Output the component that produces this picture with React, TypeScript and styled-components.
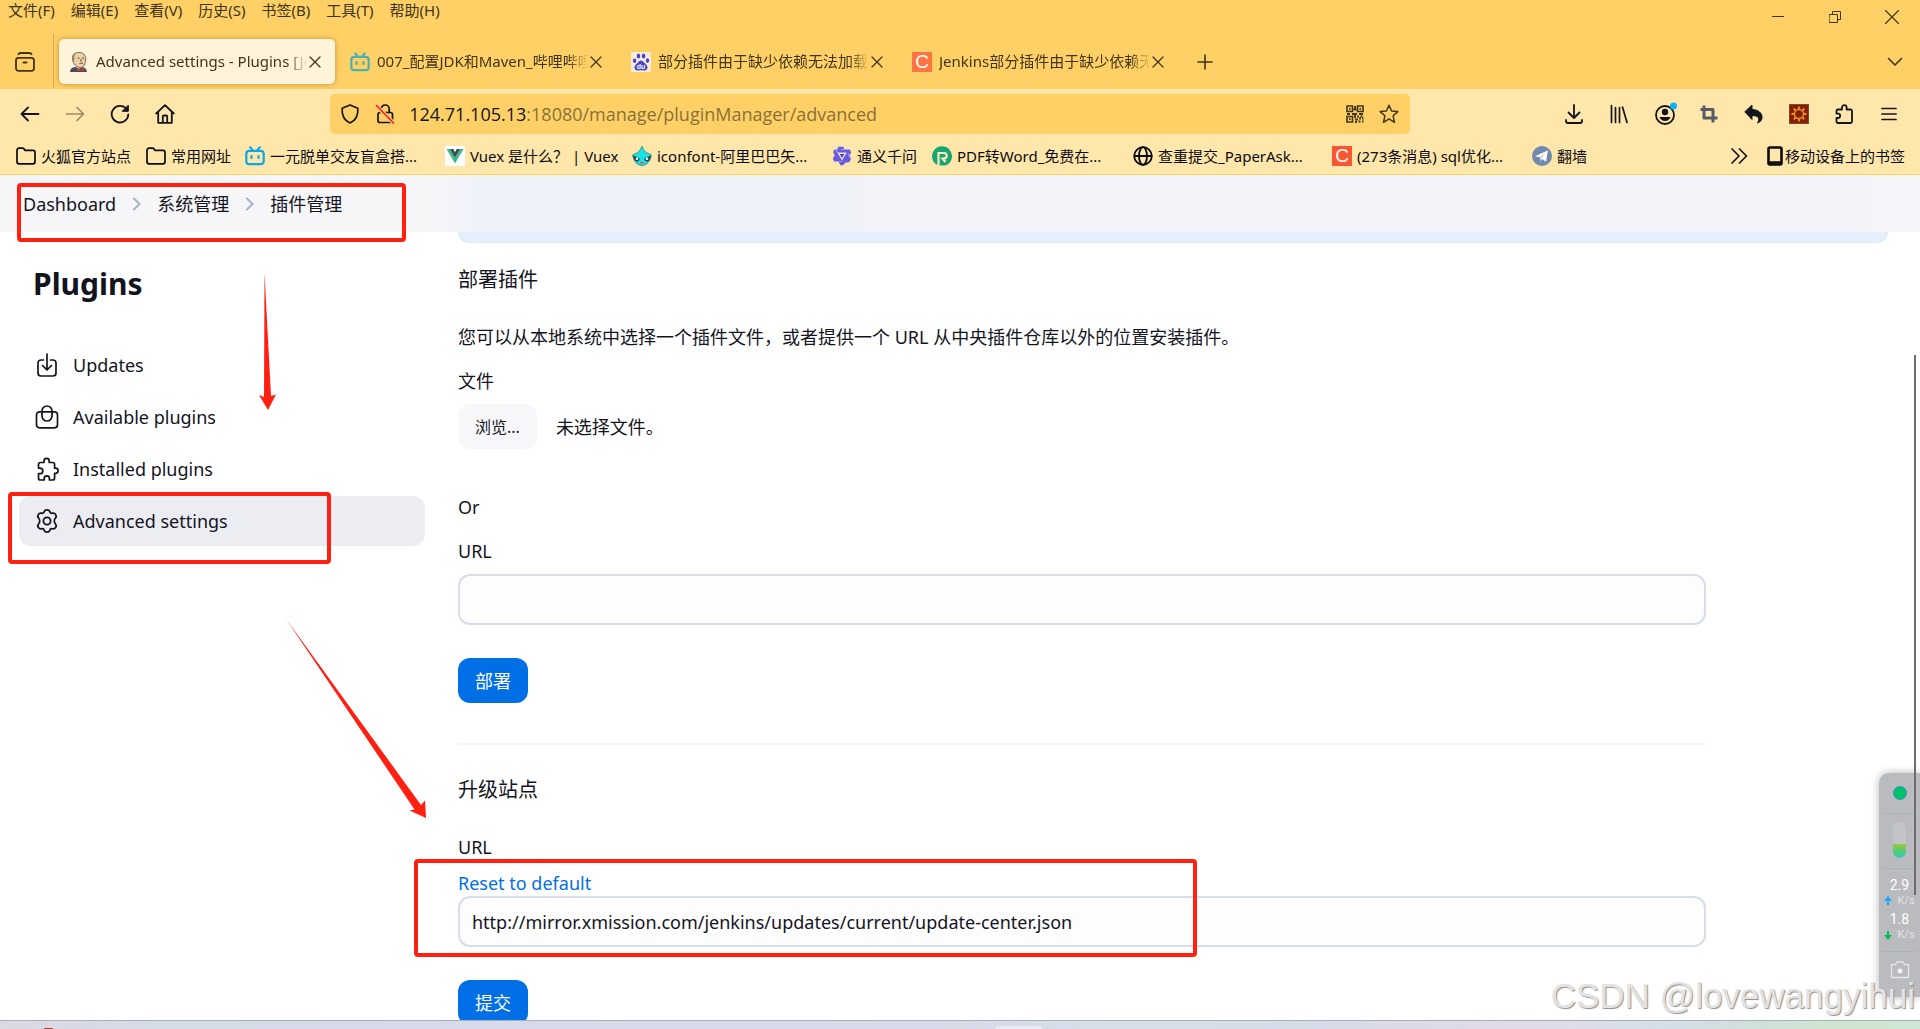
import React from "react";
import styled, { createGlobalStyle } from "styled-components";

const GlobalStyle = createGlobalStyle`
  *, *::before, *::after { box-sizing: border-box; }
  body {
    margin: 0;
    overflow: hidden;
    font-family: "Noto Sans", "Noto Sans CJK SC", sans-serif;
    color: #14141f;
  }
  button, input { font: inherit; color: inherit; }
  button { border: 0; padding: 0; background: none; }
  a { color: inherit; text-decoration: none; }
  h1, h2, p { margin: 0; font-weight: 400; }
  svg { display: block; flex: none; }
`;

const Window = styled.div`
  position: relative;
  display: flex;
  flex-direction: column;
  height: 100vh;
  overflow: hidden;
  background: #fff;
`;

/* ---------- browser chrome ---------- */

const TitleArea = styled.header`
  display: flex;
  flex-direction: column;
  height: 89px;
  flex: none;
  background: #ffd066;
  color: #40341a;
`;

const MenuRow = styled.div`
  display: flex;
  justify-content: space-between;
  height: 34px;
`;

const MenuBar = styled.nav`
  display: flex;
  gap: 16px;
  height: 20px;
  padding-left: 8px;
  align-items: center;
`;

const MenuButton = styled.button`
  font-size: 15px;
  line-height: 20px;
  white-space: nowrap;
`;

const WindowControls = styled.div`
  display: flex;
  align-items: center;
  height: 34px;
`;

const ControlButton = styled.button`
  display: flex;
  align-items: center;
  justify-content: center;
  width: 57px;
  height: 34px;
`;

const TabStrip = styled.div`
  display: flex;
  align-items: center;
  height: 55px;
`;

const TabOverview = styled.button`
  display: flex;
  align-items: center;
  justify-content: center;
  width: 54px;
  height: 55px;
  padding-right: 4px;
  border-right: 1px solid #d9ad4c;
`;

const TabList = styled.div`
  display: flex;
  gap: 5px;
  padding: 0 7px 0 5px;
`;

const Tab = styled.div<{ $active?: boolean }>`
  display: flex;
  align-items: center;
  width: 276px;
  height: 45px;
  padding: 0 12px 0 10px;
  border-radius: 5px;
  background: ${(p) => (p.$active ? "#fff3da" : "transparent")};
  box-shadow: ${(p) => (p.$active ? "0 0 5px rgba(120, 80, 0, 0.5)" : "none")};
`;

const TabTitle = styled.span`
  flex: 1;
  min-width: 0;
  margin-left: 7px;
  padding-bottom: 2px;
  overflow: hidden;
  white-space: nowrap;
  font-size: 15px;
  line-height: 24px;
  mask-image: linear-gradient(to right, #000 calc(100% - 20px), transparent);
`;

const IconButton = styled.button<{ $w?: number; $h?: number }>`
  display: flex;
  align-items: center;
  justify-content: center;
  flex: none;
  width: ${(p) => p.$w ?? 40}px;
  height: ${(p) => p.$h ?? 40}px;
`;

const Grow = styled.div<{ $by?: number }>`
  flex: ${(p) => p.$by ?? 1};
`;

const NavToolbar = styled.div`
  display: flex;
  align-items: center;
  flex: none;
  height: 49px;
  padding: 1px 8px 0 7px;
  background: #ffe6ab;
`;

const UrlBar = styled.form`
  display: flex;
  align-items: center;
  flex: 15;
  height: 40px;
  padding: 0 5px 0 8px;
  border-radius: 5px;
  background: #ffd066;
`;

const UrlText = styled.div`
  flex: 1;
  margin-left: 1px;
  font-family: "Open Sans", "Noto Sans", sans-serif;
  font-size: 18px;
  line-height: 24px;
  color: #8a7038;
  white-space: nowrap;
`;

const UrlHost = styled.span`
  color: #15141a;
`;

const BookmarkBar = styled.nav`
  display: flex;
  align-items: center;
  flex: none;
  height: 37px;
  padding: 0 15px 0 16px;
  border-bottom: 1px solid #ffd066;
  background: #ffe6ab;
`;

const Bookmark = styled.a<{ $w?: number; $gap?: number }>`
  display: flex;
  align-items: center;
  flex: none;
  gap: ${(p) => p.$gap ?? 5}px;
  width: ${(p) => (p.$w ? p.$w + "px" : "auto")};
  font-size: 15px;
  line-height: 24px;
  color: #0c0b10;
  white-space: nowrap;
`;

/* ---------- page ---------- */

const Page = styled.div`
  display: flex;
  flex-direction: column;
  flex: 1;
  min-height: 0;
  overflow: hidden;
`;

const Breadcrumbs = styled.nav`
  display: flex;
  align-items: flex-start;
  flex: none;
  height: 57px;
  padding: 17px 23px 0;
  gap: 16px;
  background: linear-gradient(to right, #f6f6f9 430px, #eff2f9 480px, #eff2f9 820px, #f2f3f8 900px, #f2f3f8 1840px, #f5f6f9 1910px);
  font-size: 18px;
  line-height: 24px;

  svg { margin-top: 5px; }
`;

const Columns = styled.div`
  display: flex;
  flex: 1;
  min-height: 0;
`;

const Sidebar = styled.aside`
  flex: none;
  width: 458px;
  padding: 30px 33px 0 19px;
`;

const PageTitle = styled.h1`
  margin: 0 0 34px 14px;
  font-size: 30px;
  font-weight: 700;
  line-height: 44px;
`;

const TaskList = styled.ul`
  display: flex;
  flex-direction: column;
  gap: 2px;
  margin: 0;
  padding: 0;
  list-style: none;
`;

const Task = styled.a<{ $active?: boolean }>`
  display: flex;
  align-items: center;
  gap: 14px;
  height: 50px;
  padding-left: 16px;
  border-radius: 12px;
  background: ${(p) => (p.$active ? "#ecedf3" : "transparent")};
  font-size: 18px;
  line-height: 24px;
`;

const Main = styled.main`
  flex: 1;
  min-width: 0;
  padding-right: 32px;
`;

const Alert = styled.div`
  height: 11px;
  border: 1px solid #d6eafa;
  border-top: 0;
  border-radius: 0 0 12px 12px;
  background: #e5effc;
`;

const Section = styled.section`
  display: flex;
  flex-direction: column;
  align-items: flex-start;
  max-width: 1248px;
`;

const SectionTitle = styled.h2`
  margin: 22px 0 30px;
  font-size: 20px;
  line-height: 30px;
`;

const Text = styled.p`
  margin-bottom: 20px;
  font-size: 18px;
  line-height: 24px;
`;

const Label = styled.label`
  margin-bottom: 11px;
  font-size: 18px;
  line-height: 24px;
`;

const FileRow = styled.div`
  display: flex;
  align-items: center;
  gap: 19px;
  margin-bottom: 46px;
  font-size: 18px;
  line-height: 24px;
`;

const FileInput = styled.input`
  position: absolute;
  width: 1px;
  height: 1px;
  opacity: 0;
`;

const FileButton = styled.label`
  display: flex;
  align-items: center;
  height: 45px;
  padding: 0 17px;
  border-radius: 12px;
  background: #f7f7fa;
  font-size: 16px;
`;

const TextInput = styled.input`
  width: 100%;
  height: 51px;
  padding: 0 12px;
  border: 2px solid #d7dde9;
  border-radius: 12px;
  background: #fdfdfd;
  font-size: 18px;
  line-height: 24px;
  outline: none;
`;

const PrimaryButton = styled.button`
  height: 45px;
  margin-top: 33px;
  padding: 0 17px;
  border-radius: 12px;
  background: #006fe6;
  color: #fff;
  font-size: 18px;
  line-height: 24px;
`;

const Divider = styled.hr`
  width: 100%;
  height: 2px;
  margin: 40px 0 8px;
  border: 0;
  background: #f3f3f9;
`;

const ResetLink = styled.a`
  margin: 1px 0;
  color: #006fe6;
  font-size: 18px;
  line-height: 24px;
`;

const Taskbar = styled.footer`
  display: flex;
  align-items: flex-end;
  flex: none;
  height: 9px;
  border-top: 1px solid #a9adb8;
  background: linear-gradient(to right, #dcd8e4 0, #d6dbe8 8%, #d8dae8 50%, #d6dfea 60%, #d6dbe8 68%, #e2d9e8 79%, #dcdeea 83%, #d3dfe8 87%, #d0e0dc 91%, #cfe4d0 95%, #cfe6d4 100%);
`;

const TaskbarItem = styled.span<{ $left: number; $w: number; $h: number; $color: string }>`
  margin-left: ${(p) => p.$left}px;
  width: ${(p) => p.$w}px;
  height: ${(p) => p.$h}px;
  border-radius: 4px 4px 0 0;
  background: ${(p) => p.$color};
`;

/* ---------- things floating over the page ---------- */

const ScrollThumb = styled.div`
  position: absolute;
  top: 355px;
  right: 4px;
  width: 2px;
  height: 540px;
  background: #6c6d70;
`;

const Monitor = styled.aside`
  position: absolute;
  top: 773px;
  right: 0;
  display: flex;
  flex-direction: column;
  align-items: center;
  width: 41px;
  height: 224px;
  padding: 13px 4px 0;
  border-radius: 10px 0 0 10px;
  background: #babbbf;
  box-shadow: 0 0 8px rgba(0, 0, 0, 0.3);
`;

const StatusDot = styled.span`
  width: 14px;
  height: 14px;
  margin-bottom: 3px;
  border: 1px solid #3b90c8;
  border-radius: 50%;
  background: #00c16a;
`;

const MonitorRule = styled.span`
  width: 100%;
  height: 1px;
  margin: 10px 0 8px;
  background: #a9b4b8;
`;

const Gauge = styled.span`
  width: 13px;
  height: 36px;
  border-radius: 7px;
  background: linear-gradient(to bottom, #c3c4c8 22px, #9cc63c 22px, #52cd74 29px, #3cc3c0 36px);
`;

const Speeds = styled.div`
  display: flex;
  flex-direction: column;
  gap: 4px;
`;

const Speed = styled.div`
  display: flex;
  flex-direction: column;
  align-items: center;
  color: #fff;
  font-family: Roboto, "Noto Sans", sans-serif;
  font-size: 14px;
  line-height: 17px;
`;

const SpeedUnit = styled.span`
  display: flex;
  align-items: center;
  gap: 5px;
  color: #e2e2e4;
  font-size: 11px;
  line-height: 13px;
`;

const Watermark = styled.div`
  position: absolute;
  right: 5px;
  bottom: 13px;
  color: #e3e3e4;
  font-family: "Liberation Sans", Arial, sans-serif;
  font-size: 35px;
  line-height: 40px;
  text-shadow: 1px 1px 1px #8e8e8e;
  white-space: nowrap;
`;

const Highlight = styled.div<{ $x: number; $y: number; $w: number; $h: number }>`
  position: absolute;
  left: ${(p) => p.$x}px;
  top: ${(p) => p.$y}px;
  width: ${(p) => p.$w}px;
  height: ${(p) => p.$h}px;
  border: 4px solid #ff2012;
  border-radius: 4px;
  pointer-events: none;
`;

const Arrow = styled.svg<{ $x: number; $y: number }>`
  position: absolute;
  left: ${(p) => p.$x}px;
  top: ${(p) => p.$y}px;
  fill: #ff2012;
  pointer-events: none;
`;

/* ---------- icons ---------- */

type IconProps = { size?: number; sw?: number; box?: number; children: React.ReactNode };

const Icon = ({ size = 20, sw = 2, box = 20, children }: IconProps) => (
  <svg width={size} height={size} viewBox={`0 0 ${box} ${box}`} fill="none" stroke="currentColor" strokeWidth={sw} strokeLinecap="round" strokeLinejoin="round" aria-hidden="true">
    {children}
  </svg>
);

const CloseIcon = () => (
  <Icon size={12} box={12} sw={1.3}><path d="M1 1l10 10M11 1L1 11" /></Icon>
);

const FolderIcon = () => (
  <Icon sw={1.7}><path d="M1 4.2a2 2 0 0 1 2-2h3.5a2 2 0 0 1 1.6.8l1 1.4H17a2 2 0 0 1 2 2v9.4a2 2 0 0 1-2 2H3a2 2 0 0 1-2-2z" /></Icon>
);

const BiliIcon = ({ color }: { color: string }) => (
  <svg width="20" height="20" viewBox="0 0 20 20" fill="none" stroke={color} strokeWidth="2.2" strokeLinecap="round" aria-hidden="true">
    <rect x="1.3" y="4.8" width="17.4" height="13.4" rx="3" />
    <path d="M5.2 1.3l2.4 3M14.8 1.3l-2.4 3M6.5 10v2M13.5 10v2" />
  </svg>
);

const JenkinsIcon = () => (
  <svg width="20" height="20" viewBox="0 0 20 20" aria-hidden="true">
    <path d="M1 20c0-3 2-4.500 5-5l7 0c3 .5 4.500 2 5 5z" fill="#41505c" />
    <path d="M6 13l3 4 5-2-1-3z" fill="#f6f1e8" />
    <path d="M3.500 7C3.300 3 6 .4 10 .4S16.700 3 16.700 7c0 5-2 8.500-5.200 8.500C8 15.500 3.800 12 3.500 7z" fill="#ecd0a8" stroke="#5c4a3a" strokeWidth=".8" />
    <path d="M3.500 8C2.400 4.500 4 1.400 7 .8 5 3 5.200 5 5.300 9.500z" fill="#8b8275" />
    <path d="M8.500 6.200h2M13 6.200h2M10.500 11.500q2-1 3.500 0M12 7v2.500" stroke="#4b3a2c" strokeWidth=".9" fill="none" />
    <path d="M8.500 16l3 1.200L15 16v3.500l-3.200-1.200-3.300 1.200z" fill="#d33a2e" />
  </svg>
);

const BaiduIcon = () => (
  <svg width="20" height="20" viewBox="0 0 20 20" aria-hidden="true">
    <rect width="20" height="20" rx="2" fill="#f8eedd" />
    <g fill="#4a46c6">
      <ellipse cx="3.600" cy="8.800" rx="1.700" ry="2.300" />
      <ellipse cx="7.500" cy="4" rx="1.800" ry="2.500" />
      <ellipse cx="12.600" cy="4" rx="1.800" ry="2.500" />
      <ellipse cx="16.500" cy="8.600" rx="1.700" ry="2.300" />
      <path d="M10 8.400c2 0 3 2 4.500 3.400 2 1.900 2.600 3.500 1.600 5.200-1.300 2.100-3.800 1.300-6.100 1.300s-4.800.8-6.100-1.300c-1-1.700-.4-3.300 1.600-5.200C7 10.400 8 8.400 10 8.400z" />
    </g>
    <text x="10" y="17" textAnchor="middle" fontSize="7" fontWeight="700" fill="#fff" fontFamily="Liberation Sans, sans-serif">du</text>
  </svg>
);

const LetterBadge = styled.span<{ $bg: string }>`
  flex: none;
  width: 20px;
  height: 20px;
  background: ${(p) => p.$bg};
  color: #fff;
  font-family: "Liberation Sans", Arial, sans-serif;
  font-size: 19px;
  line-height: 20px;
  text-align: center;
`;

const VueIcon = () => (
  <svg width="20" height="20" viewBox="0 0 20 20" aria-hidden="true">
    <rect width="20" height="20" fill="#fff" />
    <path d="M1.500 3H5l5 8.700L15 3h3.500L10 17.500z" fill="#41b883" />
    <path d="M5 3h3.200L10 6.200 11.800 3H15l-5 8.700z" fill="#35495e" />
  </svg>
);

const IconfontIcon = () => (
  <svg width="20" height="20" viewBox="0 0 20 20" aria-hidden="true">
    <path d="M10 0c1 3 2.500 5 4.500 6.500L19.500 9l-1 3.500c-1.500 4.500-5 7-8.500 7s-7-2.500-8.500-7L.5 9l5-2.500C7.500 5 9 3 10 0z" fill="#1fe0e0" stroke="#2b7a83" strokeWidth=".7" />
    <path d="M1 9.500l6.500 2.700c.5 2-1 3.300-2.700 3.300S1.500 13 1 9.500zM19 9.500l-6.500 2.700c-.5 2 1 3.300 2.700 3.300S18.500 13 19 9.500z" fill="#23404a" />
    <circle cx="5" cy="12.800" r="1.300" fill="#fff" /><circle cx="15" cy="12.800" r="1.300" fill="#fff" />
    <path d="M8 17h4" stroke="#e64b3c" strokeWidth="1.200" />
  </svg>
);

const TongyiIcon = () => (
  <svg width="20" height="20" viewBox="0 0 20 20" aria-hidden="true">
    <path d="M6.500.8h4.700l1.600 2.700h5l1.400 3-2 3.500 1.800 3.200-2.200 3.400h-3.300L11 19.300H8.500L6.300 15.500H2.200L.8 12.500l2-3.300L1 6l1.600-2.500h2.500z" fill="#655ae0" />
    <path d="M5.200 6.500h9.600L10 14.600z" fill="#efe2cf" />
    <path d="M7.700 8h4.600L10 12z" fill="#4b3fc6" />
    <path d="M6.500.8L4 6.500M17.800 3.500H9M19 13.200l-3-5.700M2.200 15.500h8" stroke="#a79df5" strokeWidth="1.200" />
  </svg>
);

const PdfBadge = () => (
  <svg width="20" height="20" viewBox="0 0 20 20" fill="none" aria-hidden="true">
    <path d="M4 18.300A10 10 0 1 1 16 18.300L13 19.400H7z" fill="#17a673" />
    <path d="M6.500 19.800V7h5.500a2.700 2.700 0 0 1 0 5.400l-1.500.2 3 3.400" stroke="#ffe9c0" strokeWidth="2.200" />
  </svg>
);

const GlobeIcon = () => (
  <Icon sw={1.800}><circle cx="10" cy="10" r="8.800" /><ellipse cx="10" cy="10" rx="4" ry="8.800" /><path d="M1.500 10h17" /></Icon>
);

const TelegramIcon = () => (
  <svg width="20" height="20" viewBox="0 0 20 20" aria-hidden="true">
    <circle cx="10" cy="10" r="10" fill="#7089ad" />
    <path d="M3 10.200L16 4.300l-2 11.500-3.800-2.900-1.800 2-.6-3.600z" fill="#fff" />
    <path d="M7.800 11.300L14 6.500l-4.600 5.600-1 2.800z" fill="#b9c6d9" />
  </svg>
);

const QrIcon = () => (
  <svg width="18" height="18" viewBox="0 0 18 18" fill="none" stroke="#40341a" strokeWidth="1.600" aria-hidden="true">
    <path d="M1 1h5.500v5.500H1zM11.500 1H17v5.500h-5.500zM1 11.500h5.500V17H1z" />
    <path d="M3 3.800h1.600M13.500 3.800h1.600M3 14.200h1.600M9 1v3M7.500 4.500h3M1 9h3M6 9h5M13 9h4M9 10v3M11 11.500h2M14.500 11.500h2M9 14.500h3M13 13.500h2M16 13.500h1.500M9 17h2M12.500 16.500h2M16 16.500h1.500" strokeWidth="1.800" />
  </svg>
);

const SunIcon = () => (
  <svg width="20" height="20" viewBox="0 0 20 20" fill="none" aria-hidden="true">
    <rect width="20" height="20" fill="#7a4a33" />
    <rect x="1" y="1" width="18" height="18" fill="#8c1c00" />
    <circle cx="10" cy="10" r="4.500" stroke="#d99a2b" strokeWidth="1.400" />
    <path d="M10 2.500v2.500M10 15v2.500M2.500 10H5M15 10h2.500M4.700 4.700l1.800 1.800M13.500 13.500l1.800 1.800M4.700 15.300l1.800-1.800M13.500 6.500l1.800-1.800" stroke="#d99a2b" strokeWidth="1.800" />
  </svg>
);

const ChevronRight = () => (
  <svg width="9" height="14" viewBox="0 0 9 14" fill="none" stroke="#a3b1ca" strokeWidth="2" strokeLinecap="round" aria-hidden="true">
    <path d="M2 1.500L7.500 7 2 12.500" />
  </svg>
);

/* ---------- data ---------- */

const menus = ["文件(F)", "编辑(E)", "查看(V)", "历史(S)", "书签(B)", "工具(T)", "帮助(H)"];

const tabs = [
  { title: "Advanced settings - Plugins [Jenkins]", icon: <JenkinsIcon />, active: true },
  { title: "007_配置JDK和Maven_哔哩哔哩", icon: <BiliIcon color="#4fb0b0" /> },
  { title: "部分插件由于缺少依赖无法加载", icon: <BaiduIcon /> },
  { title: "Jenkins部分插件由于缺少依赖无法", icon: <LetterBadge $bg="#ff7541">C</LetterBadge> },
];

const bookmarks = [
  { title: "火狐官方站点", w: 130, icon: <FolderIcon /> },
  { title: "常用网址", w: 99, icon: <FolderIcon /> },
  { title: "一元脱单交友盲盒搭...", w: 200, icon: <BiliIcon color="#0ea7e8" /> },
  { title: "Vuex 是什么？ | Vuex", w: 187, icon: <VueIcon /> },
  { title: "iconfont-阿里巴巴矢...", w: 200, icon: <IconfontIcon /> },
  { title: "通义千问", w: 100, icon: <TongyiIcon /> },
  { title: "PDF转Word_免费在...", w: 201, icon: <PdfBadge /> },
  { title: "查重提交_PaperAsk...", w: 199, icon: <GlobeIcon /> },
  { title: "(273条消息) sql优化...", w: 200, icon: <LetterBadge $bg="#fc5531">C</LetterBadge> },
  { title: "翻墙", w: 60, icon: <TelegramIcon /> },
];

const tasks = [
  {
    title: "Updates",
    icon: <Icon size={24} box={24} sw={1.700}><path d="M8.500 7H6a3 3 0 0 0-3 3v10a3 3 0 0 0 3 3h12a3 3 0 0 0 3-3V10a3 3 0 0 0-3-3h-2.500M12 1v15.500M7.500 12.500L12 17l4.500-4.500" /></Icon>,
  },
  {
    title: "Available plugins",
    icon: <Icon size={24} box={24} sw={1.700}><rect x="1.500" y="6.800" width="21" height="16" rx="3" /><path d="M7 6.800V6a5 5 0 0 1 10 0v.8M7 6.800v4.200a5 5 0 0 0 10 0V6.800" /></Icon>,
  },
  {
    title: "Installed plugins",
    icon: <Icon size={24} box={24} sw={1.700}><path d="M20.500 11.200h-.9V7.500a2 2 0 0 0-2-2h-3.400V4a2.600 2.600 0 0 0-5.200 0v1.500H5.500a2 2 0 0 0-2 2v3.600H5a2.800 2.800 0 0 1 0 5.600H3.500v4.300a2 2 0 0 0 2 2h3.700v-1.500a2.600 2.600 0 0 1 5.200 0V23h3.200a2 2 0 0 0 2-2v-4.600h.9a2.600 2.600 0 0 0 0-5.200z" /></Icon>,
  },
  {
    title: "Advanced settings",
    active: true,
    icon: <Icon size={24} box={24} sw={1.800}><circle cx="12" cy="12" r="3.600" /><path d="M9.300 2.600C9.700 1.300 10.600.9 12 .9s2.300.4 2.700 1.700c.4 1.300 1.500 1.900 2.800 1.600 1.500-.3 2.400.1 3.200 1.400.8 1.300.8 2.300-.2 3.400-1.400 1.600-1.700 4.200 0 6 1 1.100 1 2.100.2 3.400-.8 1.300-1.700 1.700-3.200 1.400-1.300-.3-2.400.3-2.800 1.600-.4 1.300-1.300 1.700-2.700 1.700s-2.300-.4-2.700-1.700c-.4-1.300-1.500-1.900-2.800-1.600-1.500.3-2.400-.1-3.200-1.400-.8-1.300-.8-2.300.2-3.400 1.700-1.800 1.400-4.400 0-6-1-1.100-1-2.100-.2-3.400.8-1.300 1.700-1.700 3.200-1.400 1.300.3 2.400-.3 2.800-1.600z" /></Icon>,
  },
];

const SpeedReadout = ({ value, up }: { value: string; up?: boolean }) => (
  <Speed>
    {value}
    <SpeedUnit>
      <svg width="8" height="10" viewBox="0 0 8 10" fill={up ? "#1aa7ff" : "#00bd63"} aria-hidden="true">
        <path d={up ? "M4 0l4 5H5v4H3V5H0z" : "M4 10l4-5H5V1H3v4H0z"} />
      </svg>
      K/s
    </SpeedUnit>
  </Speed>
);

export default function App() {
  return (
    <Window>
      <GlobalStyle />

      <TitleArea>
        <MenuRow>
          <MenuBar>
            {menus.map((m) => <MenuButton key={m}>{m}</MenuButton>)}
          </MenuBar>
          <WindowControls>
            <ControlButton aria-label="最小化"><Icon size={12} box={12} sw={1}><path d="M0 5.500h12" /></Icon></ControlButton>
            <ControlButton aria-label="还原"><Icon size={12} box={12} sw={1}><path d="M.5 3.500h8v8h-8zM3.500 3.500v-3h8v8h-3" /></Icon></ControlButton>
            <ControlButton aria-label="关闭"><Icon size={14} box={14} sw={1.200}><path d="M.5.5l13 13M13.500.5l-13 13" /></Icon></ControlButton>
          </WindowControls>
        </MenuRow>
        <TabStrip>
          <TabOverview aria-label="标签页概览">
            <Icon sw={1.800}><rect x="1" y="5.800" width="18" height="13" rx="2.500" /><path d="M3.500 2.200q.5-1.200 2-1.200h9q1.500 0 2 1.200M8.500 10.500h3" /></Icon>
          </TabOverview>
          <TabList>
            {tabs.map((t) => (
              <Tab key={t.title} $active={t.active}>
                {t.icon}
                <TabTitle>{t.title}</TabTitle>
                <IconButton $w={16} $h={24} aria-label="关闭标签页"><CloseIcon /></IconButton>
              </Tab>
            ))}
          </TabList>
          <IconButton aria-label="新建标签页"><Icon size={16} box={16} sw={1.600}><path d="M8 1v14M1 8h14" /></Icon></IconButton>
          <Grow />
          <IconButton $w={50} aria-label="列出所有标签页"><Icon size={16} box={16} sw={1.600}><path d="M1.500 4.500L8 11l6.500-6.500" /></Icon></IconButton>
        </TabStrip>
      </TitleArea>

      <NavToolbar>
        <IconButton $w={45} aria-label="后退"><Icon sw={1.800}><path d="M18.500 10H1.500M8 3.500L1.500 10 8 16.500" /></Icon></IconButton>
        <IconButton $w={45} aria-label="前进" disabled><Icon sw={1.700}><path d="M1.500 10h17M12 3.500l6.500 6.500-6.500 6.500" stroke="#9c8d6b" /></Icon></IconButton>
        <IconButton $w={45} aria-label="刷新">
          <Icon sw={1.800}><path d="M16.500 5A8.300 8.300 0 1 0 18.300 10.500" /><path d="M18.300 1.500v5.800h-5.800z" fill="currentColor" strokeWidth="1" /></Icon>
        </IconButton>
        <IconButton $w={46} aria-label="主页">
          <Icon sw={1.800}><path d="M1.200 9.500L10 1.200l8.800 8.300M3.200 8v10.800h13.600V8M7.800 18.500v-6a1 1 0 0 1 1-1h2.400a1 1 0 0 1 1 1v6" /></Icon>
        </IconButton>
        <Grow $by={2} />
        <UrlBar>
          <IconButton $w={24} type="button" aria-label="跟踪保护"><Icon sw={1.700}><path d="M10 1l7.800 3.200c.5 5.800-1.300 11.800-7.800 14.800C3.500 16 1.700 10 2.200 4.200z" /></Icon></IconButton>
          <IconButton $w={46} type="button" aria-label="连接不安全">
            <Icon sw={1.700}><path d="M6.200 8.500V5a4 4 0 0 1 8 0v3.500" /><rect x="3" y="8.500" width="14.500" height="10" rx="2" /><path d="M1.500 2l17 17" stroke="#ffd066" strokeWidth="4" /><path d="M1.500 1.500l17 17.500" stroke="#f0203c" /></Icon>
          </IconButton>
          <UrlText><UrlHost>124.71.105.13</UrlHost>:18080/manage/pluginManager/advanced</UrlText>
          <IconButton $w={36} type="button" aria-label="二维码"><QrIcon /></IconButton>
          <IconButton $w={32} type="button" aria-label="收藏此页">
            <Icon sw={1.500}><path d="M10 1.200l2.600 5.800 6.200.6-4.700 4.200 1.400 6.500-5.500-3.400-5.500 3.400 1.400-6.500L1.200 7.600 7.400 7z" stroke="#40341a" /></Icon>
          </IconButton>
        </UrlBar>
        <Grow $by={2} />
        <IconButton $w={45} aria-label="下载"><Icon sw={1.800}><path d="M10 1v12.500M4.500 8.500l5.500 5.500 5.500-5.500M2 16v1a2 2 0 0 0 2 2h12a2 2 0 0 0 2-2v-1" /></Icon></IconButton>
        <IconButton $w={45} aria-label="书库"><Icon sw={1.700}><path d="M2.500 1.500v17M6.500 3.500v15M10.500 3.500v15M13.500 3l4.500 15.500" /></Icon></IconButton>
        <IconButton $w={45} aria-label="账户">
          <Icon size={26} box={26} sw={1.800}><circle cx="14" cy="14" r="9" /><circle cx="14" cy="11" r="3.200" fill="currentColor" stroke="none" /><path d="M8.500 16h11c-1 2.800-3 4-5.500 4s-4.500-1.200-5.500-4z" fill="currentColor" stroke="none" /><circle cx="22.500" cy="5" r="3.500" fill="#0ab4f8" stroke="none" /></Icon>
        </IconButton>
        <IconButton $w={45} aria-label="截图"><Icon sw={3}><path d="M5 1.500V14h13.500M1.500 5.500H14V18.500" stroke="#585a68" strokeLinecap="butt" /></Icon></IconButton>
        <IconButton $w={45} aria-label="撤销关闭">
          <Icon sw={1}><path d="M8 1.500v4c6 0 10.500 3.500 10 8.500-.2 2-1.500 4-4.500 5 2.500-4 1.500-7.500-5.500-7.500v4L1 8z" fill="currentColor" /></Icon>
        </IconButton>
        <IconButton $w={45} aria-label="主题扩展"><SunIcon /></IconButton>
        <IconButton $w={45} aria-label="扩展">
          <Icon sw={1.800}><path d="M2.500 7.500V7a1.500 1.500 0 0 1 1.500-1.500h4V3.500a2.300 2.300 0 0 1 4.600 0v2h4A1.500 1.500 0 0 1 18 7v10.500a1.500 1.500 0 0 1-1.500 1.500H4a1.500 1.500 0 0 1-1.500-1.500V14H4a2.200 2.200 0 0 0 0-4.400H2.500z" /></Icon>
        </IconButton>
        <IconButton $w={45} aria-label="打开菜单"><Icon size={16} box={16} sw={1.700}><path d="M1 2.500h14M1 8h14M1 13.500h14" /></Icon></IconButton>
      </NavToolbar>

      <BookmarkBar>
        {bookmarks.map((b) => (
          <Bookmark key={b.title} href="#" $w={b.w}>{b.icon}{b.title}</Bookmark>
        ))}
        <Grow />
        <IconButton $w={52} $h={30} aria-label="更多书签"><Icon size={18} box={18} sw={1.700}><path d="M2 2l7 7-7 7M9.500 2l7 7-7 7" /></Icon></IconButton>
        <Bookmark href="#" $gap={0}>
          <Icon sw={2.600}><rect x="3.500" y="1.500" width="13" height="17" rx="1.500" /><path d="M4 16.500h12" /></Icon>
          移动设备上的书签
        </Bookmark>
      </BookmarkBar>

      <Page>
        <Breadcrumbs>
          <a href="#">Dashboard</a>
          <ChevronRight />
          <a href="#">系统管理</a>
          <ChevronRight />
          <a href="#">插件管理</a>
        </Breadcrumbs>
        <Columns>
          <Sidebar>
            <PageTitle>Plugins</PageTitle>
            <TaskList>
              {tasks.map((t) => (
                <li key={t.title}><Task href="#" $active={t.active}>{t.icon}{t.title}</Task></li>
              ))}
            </TaskList>
          </Sidebar>
          <Main>
            <Alert />
            <Section>
              <SectionTitle>部署插件</SectionTitle>
              <Text>您可以从本地系统中选择一个插件文件，或者提供一个 URL 从中央插件仓库以外的位置安装插件。</Text>
              <Label htmlFor="plugin-file">文件</Label>
              <FileRow>
                <FileInput id="plugin-file" type="file" />
                <FileButton htmlFor="plugin-file">浏览...</FileButton>
                未选择文件。
              </FileRow>
              <Text>Or</Text>
              <Label htmlFor="plugin-url">URL</Label>
              <TextInput id="plugin-url" type="text" />
              <PrimaryButton>部署</PrimaryButton>
              <Divider />
            </Section>
            <Section>
              <SectionTitle>升级站点</SectionTitle>
              <Label htmlFor="site-url">URL</Label>
              <ResetLink href="#">Reset to default</ResetLink>
              <TextInput id="site-url" type="text" defaultValue="http://mirror.xmission.com/jenkins/updates/current/update-center.json" />
              <PrimaryButton>提交</PrimaryButton>
            </Section>
          </Main>
        </Columns>
      </Page>

      <Taskbar>
        <TaskbarItem $left={44} $w={9} $h={1} $color="#b8392b" />
        <TaskbarItem $left={942} $w={47} $h={3} $color="#e8edf5" />
      </Taskbar>

      <Monitor>
        <StatusDot />
        <MonitorRule />
        <Gauge />
        <MonitorRule />
        <Speeds>
          <SpeedReadout value="2.9" up />
          <SpeedReadout value="1.8" />
        </Speeds>
        <MonitorRule />
        <Icon size={20} box={20} sw={1.300}>
          <path d="M1.500 4.500h4l1.500-2.500h6l1.500 2.500h4v13h-17z" stroke="#e6e6e8" />
          <circle cx="10" cy="11" r="2.500" fill="#f4f4f5" stroke="none" />
        </Icon>
      </Monitor>
      <ScrollThumb />
      <Watermark>CSDN @lovewangyihui</Watermark>

      <Highlight $x={17} $y={183} $w={389} $h={59} />
      <Highlight $x={8} $y={492} $w={323} $h={72} />
      <Highlight $x={414} $y={859} $w={783} $h={98} />
      <Arrow $x={259} $y={273} width="18" height="137" viewBox="0 0 18 137" aria-hidden="true">
        <path d="M5.500 0L12 123l5-1.500L9 137 0 122l5 2z" />
      </Arrow>
      <Arrow $x={286} $y={619} width="141" height="200" viewBox="0 0 141 200" aria-hidden="true">
        <path d="M0 0L135 186l4-4.500L140 199l-16.500-7.500 5-1z" />
      </Arrow>
    </Window>
  );
}
